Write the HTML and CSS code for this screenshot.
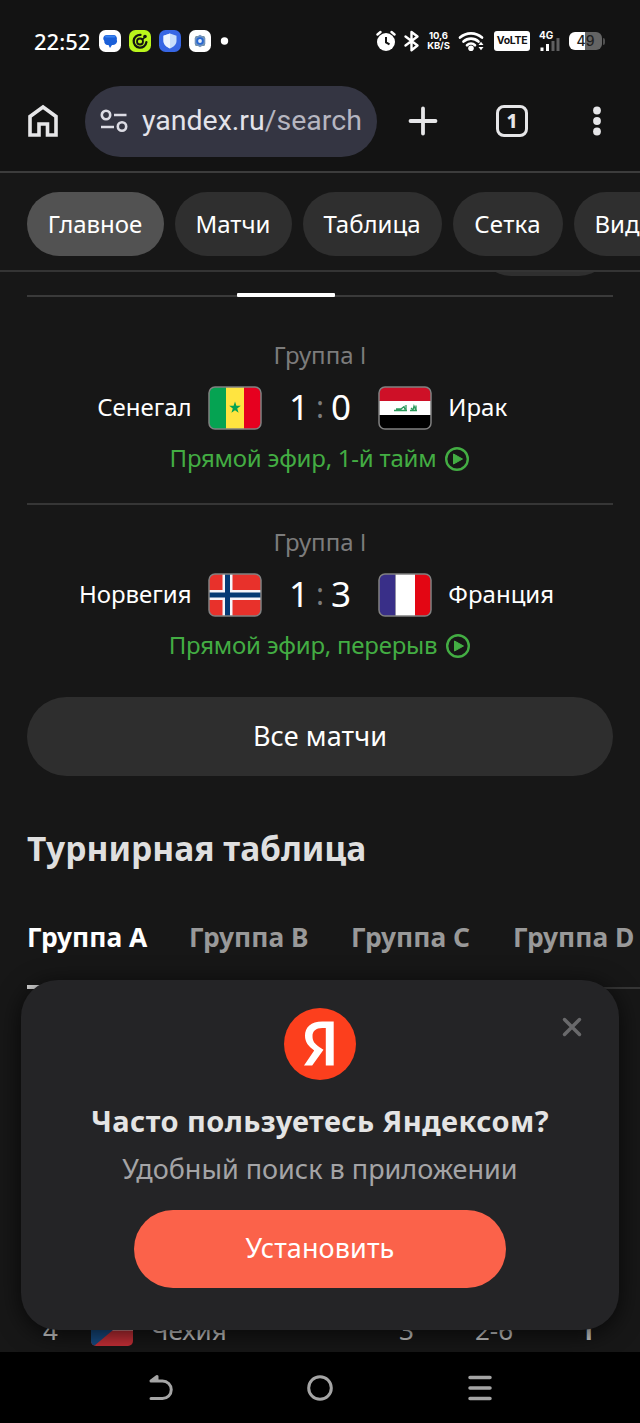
FILE: index.html
```html
<!DOCTYPE html>
<html lang="ru">
<head>
<meta charset="utf-8">
<meta name="viewport" content="width=device-width, initial-scale=1">
<title>Яндекс</title>
<link rel="stylesheet" href="styles.css">
</head>
<body>
<div class="phone">
  <header class="status">
    <span class="clock">22:52</span>
    <svg class="apps" width="132" height="22" viewBox="0 0 132 22">
      <rect x="0" y="0" width="22" height="22" rx="6.5" fill="#fff"/>
      <path d="M8 5h6.500a3.500 3.500 0 0 1 3.300 4.500 4 4 0 0 1-3.800 5.500H13l-2 3-1.500-3H8.500A3.500 3.500 0 0 1 5.300 11 3.500 3.500 0 0 1 8 5z" fill="#1a5fd8"/>
      <path d="M7 6.500h8.500" stroke="#3a83f0" stroke-width="1.800" stroke-linecap="round"/>
      <rect x="30" y="0" width="22" height="22" rx="6.500" fill="#b9f51c"/>
      <path d="M41.500 4.900a6.400 6.400 0 1 0 5.900 7.300" fill="none" stroke="#131313" stroke-width="2.300" stroke-linecap="round"/>
      <circle cx="41" cy="11.500" r="3" fill="none" stroke="#131313" stroke-width="1.800"/>
      <path d="M43 9.800l2.500-2.300" stroke="#131313" stroke-width="1.600"/>
      <circle cx="46" cy="6.500" r="1.800" fill="#131313"/>
      <rect x="60" y="0" width="22" height="22" rx="6.500" fill="#3766e4"/>
      <path d="M71 3.500l6.500 2.300v5c0 3.500-2.500 6-6.500 7.700-4-1.700-6.500-4.200-6.500-7.700v-5z" fill="#c8ddfb"/>
      <path d="M71 3.500v15c-4-1.700-6.500-4.200-6.500-7.700v-5z" fill="#edf4ff"/>
      <rect x="90" y="0" width="22" height="22" rx="6.500" fill="#fff"/>
      <rect x="96" y="6" width="10" height="10" rx="1.500" fill="#71909c"/>
      <path d="M101 4.800l5.300 3.100v6.200l-5.300 3.100-5.300-3.100V7.900z" fill="#7192bd"/>
      <circle cx="101" cy="11" r="3.800" fill="#2868d2"/>
      <circle cx="101" cy="11" r="1.900" fill="#e6edf7"/>
      <circle cx="125.500" cy="11" r="3.700" fill="#fff"/>
    </svg>
    <div class="signals">
      <svg width="44" height="22" viewBox="0 0 44 22">
        <circle cx="10" cy="12" r="9" fill="#fff"/>
        <path d="M1.500 4.500L4.500 2M18.500 4.500L15.500 2" stroke="#fff" stroke-width="2.400" stroke-linecap="round"/>
        <path d="M10 7v5.300l3.500 2" fill="none" stroke="#131313" stroke-width="2"/>
        <path d="M29.500 6.500l12 9-6 4.700V2l6 4.500-12 9" fill="none" stroke="#fff" stroke-width="2.400" stroke-linejoin="round" stroke-linecap="round"/>
      </svg>
      <span class="rate"><span>10,6</span><span>KB/S</span></span>
      <svg class="wifi" width="27" height="22" viewBox="0 0 27 22">
        <path d="M2 7.500a16.500 16.500 0 0 1 22 0M5.500 11.500a11 11 0 0 1 15 0M9 15.200a6 6 0 0 1 8 0" fill="none" stroke="#fff" stroke-width="2.700" stroke-linecap="round"/>
        <circle cx="13" cy="18.300" r="2.800" fill="#fff"/>
        <path d="M20.500 15l2.500-3.300 2.500 3.300zM20.500 17l2.500 3.300 2.500-3.300z" fill="#fff"/>
      </svg>
      <span class="volte">VoLTE</span>
      <div class="cell">
        <span class="net">4G</span>
        <svg width="20" height="13" viewBox="0 0 20 13">
          <path d="M2 13V9.500M7.500 13V6" stroke="#fff" stroke-width="3"/>
          <path d="M13 13V3M18 13V0" stroke="#5f5f60" stroke-width="3"/>
        </svg>
      </div>
      <div class="battery"><span class="level">49</span></div><span class="nub"></span>
    </div>
  </header>

  <nav class="toolbar">
    <svg class="home" width="32" height="34" viewBox="0 0 32 34">
      <path d="M3 12.500L16 3l13 9.500V31h-8.500V20h-8.500v11H3z" fill="none" stroke="#e6e6e8" stroke-width="3.600"/>
    </svg>
    <div class="address">
      <svg width="28" height="24" viewBox="0 0 28 24">
        <g fill="none" stroke="#dcdce4" stroke-width="2.600">
          <circle cx="6" cy="6" r="4.200"/><path d="M14 6h12.500M1 18h13"/><circle cx="22" cy="17.500" r="4.200"/>
        </g>
      </svg>
      <span class="url">yandex.ru<span class="path">/search</span></span>
    </div>
    <svg class="plus" width="30" height="30" viewBox="0 0 30 30"><path d="M15 2.500v25M2.500 15h25" stroke="#e6e6e8" stroke-width="3.800" stroke-linecap="round"/></svg>
    <span class="tabcount">1</span>
    <svg class="dots" width="10" height="30" viewBox="0 0 10 30"><g fill="#e6e6e8"><circle cx="5" cy="4.500" r="3.900"/><circle cx="5" cy="15" r="3.900"/><circle cx="5" cy="25.500" r="3.900"/></g></svg>
  </nav>

  <div class="chips">
    <span class="chip chip-main">Главное</span>
    <span class="chip chip-games">Матчи</span>
    <span class="chip chip-table">Таблица</span>
    <span class="chip chip-grid">Сетка</span>
    <span class="chip chip-video">Вид</span>
  </div>

  <main class="page">
    <div class="peek"><span class="peek-pill"></span></div>
    <div class="rule"><span class="rule-active"></span></div>

    <section class="match">
      <div class="group">Группа <span class="roman">I</span></div>
      <div class="row">
        <span class="team home-team">Сенегал</span>
        <svg class="flag" width="54" height="44" viewBox="0 0 54 44">
          <clipPath id="f"><rect x="1" y="1" width="52" height="42" rx="6"/></clipPath>
          <g clip-path="url(#f)"><path fill="#05a352" d="M0 0h18v44H0z"/><path fill="#ffe440" d="M18 0h18v44H18z"/><path fill="#e6001f" d="M36 0h18v44H36z"/>
          <path fill="#05a352" d="M27 15.500l1.400 4.300h4.400l-3.600 2.700 1.400 4.300-3.600-2.600-3.600 2.600 1.400-4.300-3.600-2.700h4.400z"/></g>
          <rect x="1" y="1" width="52" height="42" rx="6" fill="none" stroke="#818181" stroke-width="1.500"/>
        </svg>
        <span class="score"><span>1</span><i>:</i><span>0</span></span>
        <svg class="flag" width="54" height="44" viewBox="0 0 54 44">
          <g clip-path="url(#f)"><path fill="#ce1027" d="M0 0h54v15H0z"/><path fill="#fff" d="M0 15h54v14H0z"/><path fill="#000" d="M0 29h54v15H0z"/>
          <path d="M16 24.500h13M18 23h5l3-2.500 1 3M28 19v5.500M32 24.500h7M33 22l2 2 1-4 2 4.500V19.500" fill="none" stroke="#2c9a5c" stroke-width="1.300"/></g>
          <rect x="1" y="1" width="52" height="42" rx="6" fill="none" stroke="#818181" stroke-width="1.500"/>
        </svg>
        <span class="team">Ирак</span>
      </div>
      <div class="live"><span>Прямой эфир, 1-й тайм</span>
        <svg width="26" height="26" viewBox="0 0 26 26"><circle cx="13" cy="13" r="10.800" fill="none" stroke="#43ad43" stroke-width="2.400"/><path d="M9.500 8l9 5-9 5z" fill="#43ad43" stroke="#43ad43" stroke-linejoin="round"/></svg>
      </div>
    </section>

    <section class="match second">
      <div class="group">Группа <span class="roman">I</span></div>
      <div class="row">
        <span class="team home-team">Норвегия</span>
        <svg class="flag" width="54" height="44" viewBox="0 0 54 44">
          <g clip-path="url(#f)"><path fill="#e8312b" d="M0 0h54v44H0z"/><path d="M19.500 0v44M0 22h54" stroke="#f5f5fa" stroke-width="10"/><path d="M19.500 0v44M0 22h54" stroke="#053a74" stroke-width="5"/></g>
          <rect x="1" y="1" width="52" height="42" rx="6" fill="none" stroke="#818181" stroke-width="1.500"/>
        </svg>
        <span class="score"><span>1</span><i>:</i><span>3</span></span>
        <svg class="flag" width="54" height="44" viewBox="0 0 54 44">
          <g clip-path="url(#f)"><path fill="#392f88" d="M0 0h17.500v44H0z"/><path fill="#fff" d="M17.500 0H37v44H17.500z"/><path fill="#e30613" d="M37 0h17v44H37z"/></g>
          <rect x="1" y="1" width="52" height="42" rx="6" fill="none" stroke="#818181" stroke-width="1.500"/>
        </svg>
        <span class="team">Франция</span>
      </div>
      <div class="live"><span>Прямой эфир, перерыв</span>
        <svg width="26" height="26" viewBox="0 0 26 26"><circle cx="13" cy="13" r="10.800" fill="none" stroke="#43ad43" stroke-width="2.400"/><path d="M9.500 8l9 5-9 5z" fill="#43ad43" stroke="#43ad43" stroke-linejoin="round"/></svg>
      </div>
    </section>

    <div class="all">Все матчи</div>
    <h2 class="title">Турнирная таблица</h2>
    <div class="tabs">
      <span class="tab active">Группа A</span>
      <span class="tab">Группа B</span>
      <span class="tab">Группа C</span>
      <span class="tab">Группа D</span>
    </div>
    <div class="standing">
      <span>4</span>
      <svg width="42" height="32" viewBox="0 0 42 32"><clipPath id="cz"><rect width="42" height="32" rx="5"/></clipPath><g clip-path="url(#cz)"><path fill="#ddd" d="M0 0h42v17H0z"/><path fill="#c62f37" d="M0 16.500h42V32H0z"/><path fill="#164b82" d="M0 0l22 16L3 32H0z"/></g></svg>
      <span class="country">Чехия</span><span>3</span><span>2-6</span><span class="points">1</span>
    </div>
  </main>

  <aside class="promo">
    <svg class="close" width="20" height="20" viewBox="0 0 20 20"><path d="M2.500 2.500l15 15M17.500 2.500l-15 15" stroke="#69696b" stroke-width="3.500" stroke-linecap="round"/></svg>
    <svg width="72" height="72" viewBox="0 0 72 72"><circle cx="36" cy="36" r="36" fill="#fc3f1d"/><path fill="#fff" d="M49.700 57.600h-7.900V20.100h-3.500c-6.400 0-9.800 3.200-9.800 8 0 5.400 2.300 7.900 7.100 11.100l3.900 2.600-11.300 15.800H20l10.200-15.100c-5.900-4.200-9.200-8.200-9.200-14.900 0-8.500 5.900-14.200 17.200-14.200h11.500z"/></svg>
    <div class="ask">Часто пользуетесь Яндексом?</div>
    <div class="hint">Удобный поиск в приложении</div>
    <div class="install">Установить</div>
  </aside>

  <footer class="nav">
    <svg width="28" height="28" viewBox="0 0 28 28"><path d="M5 7h11.500a8.500 8.500 0 0 1 0 17.500H5M5 7l6-4.500V7z" fill="none" stroke="#a5a5a5" stroke-width="3" stroke-linejoin="round" stroke-linecap="round"/></svg>
    <svg width="28" height="28" viewBox="0 0 28 28"><circle cx="14" cy="14" r="11.300" fill="none" stroke="#a5a5a5" stroke-width="3"/></svg>
    <svg width="28" height="28" viewBox="0 0 28 28"><path d="M4 3.500h20M4 14h20M4 24.500h20" stroke="#a5a5a5" stroke-width="3.500" stroke-linecap="round"/></svg>
  </footer>
</div>
</body>
</html>
```

FILE: styles.css
```css
* { box-sizing: border-box; }
body { margin: 0; background: #171717; font-family: "Noto Sans", "Open Sans", sans-serif; color: #fff; }
svg { display: block; flex: none; }
.phone { position: relative; width: 640px; height: 1423px; overflow: hidden; display: flex; flex-direction: column; background: #171717; white-space: nowrap; }

.status { height: 82px; flex: none; display: flex; align-items: center; padding: 0 36px 0 34px; background: #131313; }
.clock { width: 65px; font-size: 22px; font-weight: 500; line-height: 30px; }
.signals { margin-left: auto; display: flex; align-items: center; }
.rate { width: 27px; margin: 0 6px 0 5px; display: flex; flex-direction: column; align-items: center; font: 700 9.5px/10px Inter, sans-serif; letter-spacing: -0.1px; }
.signals .wifi { margin-right: 9px; }
.volte { width: 36px; height: 20px; border-radius: 3px; background: #fff; color: #131313; font: 700 10.5px/20px Inter, sans-serif; text-align: center; letter-spacing: -0.3px; }
.cell { width: 21px; height: 20px; margin: 0 9px; display: flex; flex-direction: column; align-items: flex-end; position: relative; justify-content: flex-end; }
.net { position: absolute; left: 0; top: -2px; font: 700 10px/12px Inter, sans-serif; }
.battery { width: 33px; height: 18px; border-radius: 6px; background: linear-gradient(90deg, #fff 50%, #646464 50%); color: #202020; font: 500 14px/18px Inter, sans-serif; text-align: center; }
.nub { width: 2px; height: 7px; margin-left: 1px; margin-right: -1px; border-radius: 0 2px 2px 0; background: #505050; }

.toolbar { height: 91px; flex: none; display: flex; align-items: center; padding: 0 38px 11px 27px; background: #131313; border-bottom: 2px solid #3c3c3c; }
.address { width: 292px; height: 71px; margin-left: 26px; border-radius: 36px; background: #343542; display: flex; align-items: center; padding-left: 15px; gap: 14px; }
.url { font: 400 28.5px/42px Roboto, sans-serif; color: #e3e3ea; }
.path { color: #b6b6c0; }
.plus { margin-left: 31px; }
.tabcount { width: 32px; height: 32px; margin-left: 58px; border: 3.5px solid #e6e6e8; border-radius: 8px; color: #e6e6e8; font: 800 19px/26px "Noto Sans", sans-serif; text-align: center; }
.dots { margin-left: auto; }

.chips { height: 99px; flex: none; display: flex; gap: 11px; padding: 19px 0 0 26.5px; border-bottom: 2px solid #343434; overflow: hidden; }
.chip { height: 64px; flex: none; border-radius: 32px; background: #2f2f2f; font-size: 24px; line-height: 63px; text-align: center; }
.chip-main { width: 137px; background: #525252; }
.chip-games { width: 117px; }
.chip-table { width: 139px; }
.chip-grid { width: 110px; letter-spacing: 0.3px; }
.chip-video { width: 115px; padding-left: 21px; text-align: left; }

.page { flex: 1; min-height: 0; display: flex; flex-direction: column; padding: 0 27px; }
.peek { height: 4px; margin-right: 2px; overflow: hidden; display: flex; justify-content: flex-end; align-items: flex-end; }
.peek-pill { width: 132px; height: 64px; flex: none; border-radius: 32px; background: #2f2f2f; }
.rule { height: 4px; margin-top: 17px; padding-left: 210px; background: linear-gradient(#3a3a3a, #3a3a3a) 0 2px / 100% 2px no-repeat; }
.rule-active { display: block; width: 98px; height: 4px; border-radius: 1px; background: #fff; }

.match { height: 208px; flex: none; display: flex; flex-direction: column; padding-top: 43px; border-bottom: 2px solid #363636; }
.second { height: 192px; padding-top: 22px; border: 0; }
.group { height: 30px; font-size: 24px; line-height: 30px; text-align: center; color: #7c7c7c; }
.roman { font-family: "Open Sans", sans-serif; }
.row { height: 44px; margin-top: 16px; display: flex; align-items: center; justify-content: center; }
.team { width: 165px; margin-left: 16px; font-size: 24px; line-height: 32px; padding-bottom: 2px; }
.home-team { text-align: right; margin: 0 16px 0 0; }
.score { width: 117px; display: flex; justify-content: center; align-items: center; font-size: 35px; line-height: 42px; padding-bottom: 2px; }
.score span { width: 22px; text-align: center; }
.score i { width: 20px; font-style: normal; font-size: 30px; color: #7c7c7c; text-align: center; }
.live { height: 30px; margin-top: 14px; display: flex; align-items: center; justify-content: center; gap: 8px; color: #43ad43; font-size: 24px; line-height: 30px; }
.live span { letter-spacing: -0.23px; padding-bottom: 2px; }

.all { height: 79px; flex: none; border-radius: 40px; background: #2e2e2e; text-align: center; font-size: 27px; line-height: 77px; letter-spacing: 0.1px; }
.title { margin: 50px 0 0; font-size: 33.5px; font-weight: 700; line-height: 44px; color: #dfdfdf; }
.tabs { height: 70px; flex: none; margin: 49px -27px 0 0; display: flex; gap: 42.5px; border-bottom: 2px solid #363636; }
.tab { width: 119.5px; flex: none; height: 70px; font-size: 26.4px; font-weight: 700; line-height: 37px; color: #999; }
.active { color: #fff; border-bottom: 4px solid #ddd; }
.standing { margin-top: 319px; display: grid; grid-template-columns: 48px 60px 248px 76px 105px 50px; align-items: center; justify-content: start; padding-left: 16px; font-size: 26px; line-height: 44px; color: #c8c8c8; }
.points { font-weight: 700; }

.promo { position: absolute; left: 21px; top: 980px; width: 598px; height: 350px; padding-top: 28px; border-radius: 37px; background: #242426; box-shadow: 0 4px 24px rgba(0,0,0,.7); display: flex; flex-direction: column; align-items: center; }
.close { position: absolute; right: 37px; top: 37px; }
.ask { margin-top: 22px; font-size: 29px; font-weight: 700; line-height: 38px; letter-spacing: 0.45px; color: #e4e4e4; }
.hint { margin-top: 11px; font-size: 27px; line-height: 36px; color: #a4a4a6; }
.install { width: 372px; height: 78px; margin-top: 23px; border-radius: 39px; background: #fb624a; font-size: 27px; line-height: 76px; letter-spacing: 0.1px; text-align: center; }

.nav { position: relative; height: 71px; flex: none; display: flex; align-items: center; justify-content: center; gap: 132px; background: #000; }
```
